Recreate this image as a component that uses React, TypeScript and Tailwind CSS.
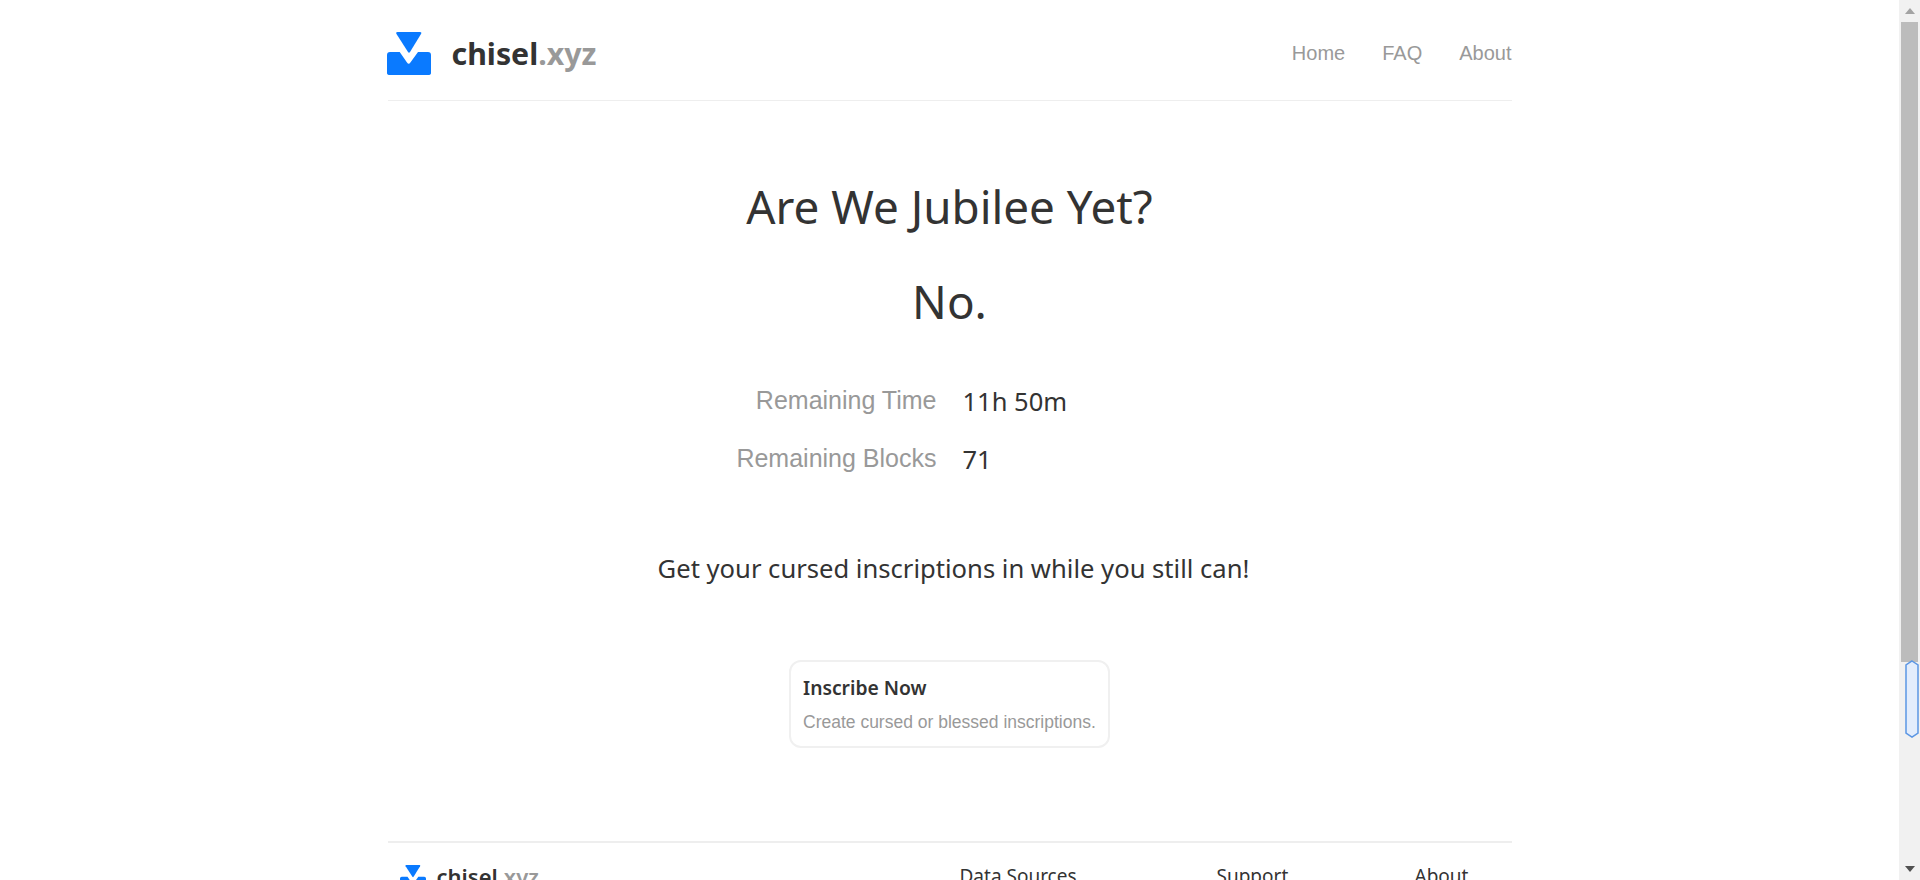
const ui = "font-['Noto_Sans','Open_Sans',sans-serif]"
const arial = "font-['Liberation_Sans',Arial,sans-serif]"

function Logo({ className }: { className: string }) {
  return (
    <svg viewBox="0 0 44 44" className={className} aria-label="chisel logo">
      <path d="M10.5 0 H33 Q35 0 34 2 L23 20 Q22 21.5 21 20 L9.5 2 Q8.5 0 10.5 0 Z" fill="#0a7aff" />
      <path d="M3 20 H12.7 L20 30.5 Q21.7 33 23.4 30.5 L31 20 H41 Q44 20 44 23 V41 Q44 43 41 43 H3 Q0 43 0 41 V23 Q0 20 3 20 Z" fill="#0a7aff" />
    </svg>
  )
}

function Scrollbar() {
  return (
    <div className="w-[21px] h-full bg-[#f1f1f1] flex flex-col items-center shrink-0">
      <div className="h-[22px] w-full flex items-center justify-center">
        <div className="w-0 h-0 border-x-[5px] border-x-transparent border-b-[6px] border-b-[#a3a3a3]" />
      </div>
      <div className="h-[640px] w-[17px] bg-[#bcbcbc] shrink-0" />
      <div className="w-[14px] h-[78px] ml-[4px] relative shrink-0 -translate-y-[2px]">
        <svg viewBox="0 0 14 78" className="absolute left-0 bottom-0 w-[14px] h-[78px] overflow-visible">
          <path d="M7 1 L13 5 V73 L7 77 L1 73 V5 Z" fill="#e3edfc" stroke="#5b96e4" strokeWidth="1.5" />
        </svg>
      </div>
      <div className="flex-1" />
      <div className="h-[22px] w-full flex items-center justify-center">
        <div className="w-0 h-0 border-x-[5px] border-x-transparent border-t-[6px] border-t-[#505050]" />
      </div>
    </div>
  )
}

export default function App() {
  return (
    <div className={`h-[880px] w-full overflow-hidden flex bg-white ${ui}`}>
      <div className="flex-1 min-w-0">
        <div className="w-[1124px] mx-auto">
          <header className="h-[101px] border-b border-[#eeeeee] flex items-start justify-between">
            <div className="flex items-center pt-[32px] -ml-[1px]">
              <Logo className="w-[44px] h-[44px]" />
              <span className="ml-[21px] text-[30.3px] leading-[44px] font-bold text-[#333333]">
                chisel<span className="text-[#999999]">.xyz</span>
              </span>
            </div>
            <nav className={`flex gap-[37px] pt-[41px] text-[20px] leading-[24px] text-[#999999] ${arial}`}>
              <span>Home</span>
              <span>FAQ</span>
              <span>About</span>
            </nav>
          </header>

          <main className="flex flex-col items-center text-[#333333]">
            <h1 className="mt-[75px] text-[45.8px] leading-[60px] font-normal">Are We Jubilee Yet?</h1>
            <p className="mt-[35px] text-[45.8px] leading-[60px]">No.</p>

            <div className="mt-[50px] flex flex-col gap-[18px] w-full">
              <div className="flex items-center h-[40px]">
                <span className={`w-[549px] text-right text-[25px] text-[#999999] ${arial}`}>Remaining Time</span>
                <span className="ml-[26px] text-[25.5px]">11h 50m</span>
              </div>
              <div className="flex items-center h-[40px]">
                <span className={`w-[549px] text-right text-[25px] text-[#999999] ${arial}`}>Remaining Blocks</span>
                <span className="ml-[26px] text-[25.5px]">71</span>
              </div>
            </div>

            <p className="mt-[72px] pl-[8px] text-[25.6px] leading-[36px]">Get your cursed inscriptions in while you still can!</p>

            <div className="mt-[73px] w-[321px] h-[88px] border-2 border-[#f0f0f0] rounded-[12px] px-[12px] pt-[12px]">
              <div className="text-[19.3px] leading-[27px] font-semibold">Inscribe Now</div>
              <div className={`mt-[10px] text-[17.5px] leading-[22px] text-[#999999] whitespace-nowrap ${arial}`}>
                Create cursed or blessed inscriptions.
              </div>
            </div>
          </main>

          <footer className="mt-[93px] border-t-2 border-[#eeeeee] flex items-start pt-[20px]">
            <Logo className="ml-[12px] w-[26px] h-[26px] mt-[2px] shrink-0" />
            <span className="ml-[11px] -mt-[3px] text-[22px] leading-[32px] font-semibold text-[#333333]">
              chisel<span className="text-[#999999]">.xyz</span>
            </span>
            <div className="flex-1" />
            <span className="-mt-[3px] text-[19px] leading-[32px] text-[#333333] w-[257px]">Data Sources</span>
            <span className="-mt-[3px] text-[19px] leading-[32px] text-[#333333] w-[198px]">Support</span>
            <span className="-mt-[3px] text-[19px] leading-[32px] text-[#333333] w-[97px]">About</span>
          </footer>
        </div>
      </div>
      <Scrollbar />
    </div>
  )
}
